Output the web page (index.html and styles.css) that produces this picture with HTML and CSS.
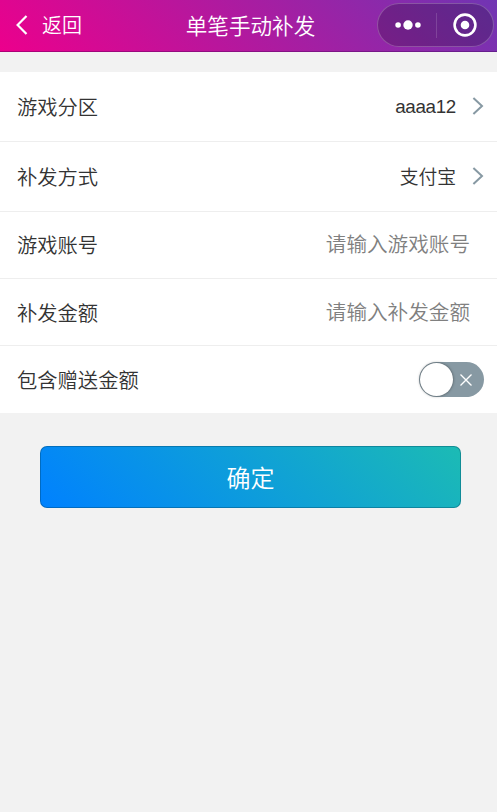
FILE: index.html
```
<!DOCTYPE html>
<html lang="zh-CN">

<head>
    <meta charset="UTF-8">
    <meta name="viewport" content="width=device-width, initial-scale=1.0">
    <title>单笔手动补发</title>
    <link rel="stylesheet" href="styles.css">
</head>

<body>

    <header class="navbar">
        <div class="back">
            <svg class="back-icon" width="12" height="20" viewBox="0 0 12 20">
                <path d="M10.5 1 L1.6 10 L10.5 19" />
            </svg>
            <span class="back-text">返回</span>
        </div>
        <h1 class="title">单笔手动补发</h1>
        <div class="capsule">
            <svg class="dots" width="26" height="10" viewBox="0 0 26 10">
                <circle cx="3.1" cy="5" r="2.8" />
                <circle cx="13" cy="5" r="4.7" />
                <circle cx="22.9" cy="5" r="2.8" />
            </svg>
            <span class="line"></span>
            <svg class="close" width="24" height="24" viewBox="0 0 24 24">
                <circle class="ring" cx="12" cy="12" r="10.4" />
                <circle class="core" cx="12" cy="12" r="4.3" />
            </svg>
        </div>
    </header>

    <form class="form">
        <div class="row tall">
            <span class="label">游戏分区</span>
            <span class="value number">aaaa12</span>
            <svg class="arrow" width="12" height="18" viewBox="0 0 12 18">
                <path d="M1.4 1 L10 9 L1.4 17" />
            </svg>
        </div>
        <div class="row tall">
            <span class="label">补发方式</span>
            <span class="value">支付宝</span>
            <svg class="arrow" width="12" height="18" viewBox="0 0 12 18">
                <path d="M1.4 1 L10 9 L1.4 17" />
            </svg>
        </div>
        <div class="row">
            <span class="label">游戏账号</span>
            <input class="text" type="text" placeholder="请输入游戏账号">
        </div>
        <div class="row">
            <span class="label">补发金额</span>
            <input class="text" type="text" placeholder="请输入补发金额">
        </div>
        <div class="row">
            <span class="label">包含赠送金额</span>
            <div class="switch">
                <span class="knob"></span>
                <svg class="cross" width="12" height="12" viewBox="0 0 12 12">
                    <path d="M0.5 0.5 L11.5 11.5 M11.5 0.5 L0.5 11.5" />
                </svg>
            </div>
        </div>
    </form>

    <button class="submit" type="button">确定</button>

</body>

</html>
```
FILE: styles.css
```
* {
    box-sizing: border-box;
}

body {
    margin: 0;
    background-color: #f2f2f2;
    color: #333;
    font-family: "Liberation Sans", "Noto Sans CJK SC", sans-serif;
    font-weight: 350;
}

.navbar {
    display: grid;
    grid-template-columns: 1fr auto 1fr;
    align-items: center;
    height: 52px;
    padding: 0 3px 2px 16px;
    background: linear-gradient(45deg, #ec008c, #6739b6) left bottom / 100% 92px no-repeat;
    box-shadow: inset 0 -1px 0 rgba(60, 0, 80, 0.35);
    color: #fff;
}

.back {
    display: flex;
    align-items: center;
    gap: 14px;
    font-size: 20px;
}

.back-icon {
    fill: none;
    stroke: #fff;
    stroke-width: 2.2;
}

.back-text {
    padding-bottom: 2px;
}

.title {
    margin: 0;
    padding: 0 9px 1px 0;
    font-size: 21.6px;
    font-weight: 350;
}

/* menu capsule */
.capsule {
    display: flex;
    align-items: center;
    justify-self: end;
    width: 117px;
    height: 44px;
    padding-left: 17px;
    border: 1px solid rgba(255, 255, 255, 0.22);
    border-radius: 22px;
    background-color: rgba(0, 0, 0, 0.2);
}

.dots {
    fill: #fff;
}

.line {
    width: 1px;
    height: 25px;
    margin: 0 16px 0 15px;
    background-color: rgba(255, 255, 255, 0.15);
}

.ring {
    fill: none;
    stroke: #fff;
    stroke-width: 2.6;
}

.core {
    fill: #fff;
}

.form {
    margin-top: 20px;
    background-color: #fff;
}

.row {
    display: flex;
    align-items: center;
    height: 67.4px;
    padding: 0 13px 0 17px;
    border-bottom: 1px solid #eee;
}

.row.tall {
    height: 69.8px;
}

.row:last-child {
    height: 67px;
    border-bottom: none;
}

.label {
    flex: 1;
    padding-bottom: 1px;
    font-size: 20.3px;
}

.value {
    padding-bottom: 2px;
    font-size: 18.8px;
}

.number {
    padding: 2px 0 0;
    letter-spacing: -0.3px;
}

.arrow {
    margin-left: 16px;
    fill: none;
    stroke: #8799a3;
    stroke-width: 2;
}

.text {
    width: 200px;
    margin-right: 14px;
    padding: 1px 0 0;
    border: none;
    outline: none;
    font: inherit;
    font-size: 20.6px;
    text-align: right;
}

.text::placeholder {
    color: #808080;
}

.switch {
    display: flex;
    align-items: center;
    width: 65px;
    height: 35px;
    padding-left: 1px;
    border-radius: 18px;
    background-color: #8799a3;
}

.knob {
    width: 33px;
    height: 33px;
    border-radius: 50%;
    background-color: #fff;
    box-shadow: 0 0 3px rgba(0, 0, 0, 0.5);
}

.cross {
    margin-left: 7px;
    fill: none;
    stroke: #fff;
    stroke-width: 1.3;
}

.submit {
    display: block;
    width: 421px;
    height: 62px;
    margin: 32.6px 0 0 40px;
    padding: 0;
    border: 1px solid rgba(0, 60, 90, 0.35);
    border-radius: 7px;
    background-image: linear-gradient(45deg, #0081ff, #1cbbb4);
    background-origin: border-box;
    color: #fff;
    font: inherit;
    font-size: 24px;
}
```
